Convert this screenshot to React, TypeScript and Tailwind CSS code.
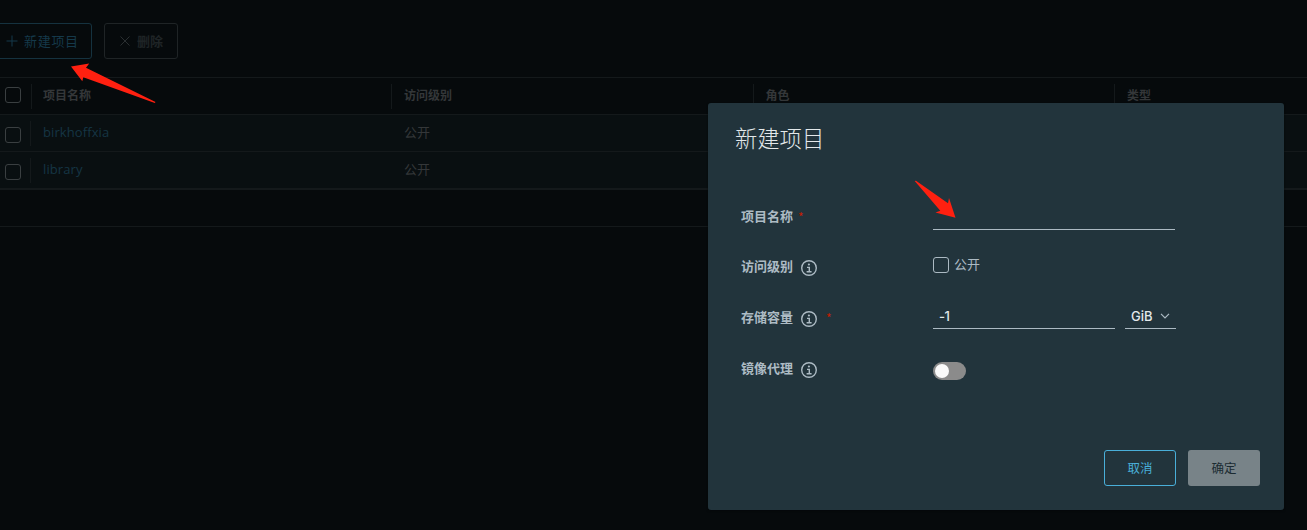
import * as React from "react";

const columns = ["项目名称", "访问级别", "角色", "类型"];

const projects = [
  { name: "birkhoffxia", access: "公开" },
  { name: "library", access: "公开" },
];

function InfoIcon() {
  return (
    <svg className="size-4 shrink-0" viewBox="0 0 16 16" fill="none" stroke="currentColor">
      <circle cx="8" cy="8" r="7.3" strokeWidth="1.4" />
      <circle cx="7.9" cy="4.5" r="1.1" fill="currentColor" stroke="none" />
      <path d="M6 7.4H8.3V11.6M5.6 11.7H10.6" strokeWidth="1.4" />
    </svg>
  );
}

function Required() {
  return <span className="mt-0.5 text-[12px] leading-none font-normal text-[#c21d00]">*</span>;
}

interface FieldProps {
  label: string;
  info?: boolean;
  required?: boolean;
  children: React.ReactNode;
}

function Field({ label, info, required, children }: FieldProps) {
  return (
    <div className="flex h-[51px] items-start first:h-[50px]">
      <div className="flex h-6 w-48 items-center text-[13px] font-bold text-[#adbbc4]">
        <span className="pb-px leading-[22px]">{label}</span>
        {info && (
          <span className="mt-1 ml-2">
            <InfoIcon />
          </span>
        )}
        {required && (
          <span className={info ? "ml-[9px] flex" : "ml-[5px] flex"}>
            <Required />
          </span>
        )}
      </div>
      {children}
    </div>
  );
}

function Toolbar() {
  return (
    <div className="flex gap-3 pt-[23px] text-[13px]">
      <button className="-ml-1 flex h-9 w-24 items-center rounded-[3px] border border-[#15323f] pl-[9px] tracking-[0.7px] text-[#15394a]">
        <svg className="mr-1.5 size-3" viewBox="0 0 12 12" stroke="currentColor">
          <path d="M6 0.5V11.5M0.5 6H11.5" />
        </svg>
        新建项目
      </button>
      <button className="flex h-9 w-[74px] items-center rounded-[3px] border border-[#1f2426] pl-[15px] font-bold text-[#1f2426]">
        <svg className="mr-[7px] size-[10px]" viewBox="0 0 10 10" stroke="#2a2f31">
          <path d="M0.5 0.5L9.5 9.5M9.5 0.5L0.5 9.5" />
        </svg>
        删除
      </button>
    </div>
  );
}

function ProjectGrid() {
  return (
    <div className="mt-[18px] border-t border-[#14191b]">
      <div className="flex h-[37px] items-center border-b border-[#14191b] text-xs font-bold text-[#343739]">
        <div className="w-[31px] shrink-0 pl-[5px]">
          <div className="mt-[-3px] size-4 rounded-[3px] border border-[#3a3f41]" />
        </div>
        {columns.map((c, i) => (
          <div
            key={c}
            className={
              i === 0
                ? "flex h-[25px] w-[360px] shrink-0 items-center border-l border-[#14191b] pb-0.5 pl-[11px]"
                : "flex h-[25px] w-[361.5px] shrink-0 items-center border-l border-[#14191b] pb-0.5 pl-3"
            }
          >
            {c}
          </div>
        ))}
      </div>
      {projects.map((p) => (
        <div
          key={p.name}
          className="flex h-[37px] items-center border-b border-[#14191b] bg-[#090f11] text-[13px] text-[#343739] last-of-type:h-[38px] last-of-type:border-b-2"
        >
          <div className="w-[30px] pl-[5px]">
            <div className="mt-[3px] size-4 rounded-[3px] border border-[#3a3f41]" />
          </div>
          <div className="flex h-[25px] w-[362px] items-center border-l border-[#14191b] pl-3 text-[#153544]">
            <span className="pb-px font-['Open_Sans',sans-serif] tracking-[0.1px]">{p.name}</span>
          </div>
          <div className="pb-0.5 pl-3">{p.access}</div>
        </div>
      ))}
      <footer className="h-[37px] border-b border-[#14191b]" />
    </div>
  );
}

function NewProjectDialog() {
  return (
    <div className="absolute top-[103px] left-[708px] flex h-[407px] w-[576px] flex-col rounded-[3px] bg-[#22343c] pt-[19px] pr-6 pb-6 pl-[26px] shadow-[0_1px_2px_#05080a]">
      <h3 className="pl-px text-[22.3px] leading-[30px] font-light text-[#e3e8ea]">新建项目</h3>
      <div className="mt-[52px] pl-[7px]">
        <Field label="项目名称" required>
          <div className="h-[26px] w-[242px] border-b border-[#acbac3]" />
        </Field>
        <Field label="访问级别" info>
          <div className="mt-px flex h-5 items-center text-[13px] text-[#acbac3]">
            <span className="mr-[5px] size-4 rounded-[3px] border border-[#acbac3]" />
            <span className="pb-0.5">公开</span>
          </div>
        </Field>
        <Field label="存储容量" info required>
          <div className="flex gap-2.5 font-[Inter] text-[13px] leading-[23px] font-medium text-[#e3e8ea]">
            <div className="h-6 w-[182px] border-b border-[#acbac3] pl-1.5 tracking-[-0.6px]">-1</div>
            <div className="flex h-6 w-[51px] items-center border-b border-[#acbac3] pl-1.5">
              <span>GiB</span>
              <svg className="mb-px ml-[7px] h-[6px] w-2.5" viewBox="0 0 10 6" fill="none" stroke="#acbac3">
                <path d="M1 0.8L5 4.8L9 0.8" strokeWidth="1.2" />
              </svg>
            </div>
          </div>
        </Field>
        <Field label="镜像代理" info>
          <div className="mt-1.5 flex h-[18px] w-[33px] items-center rounded-full bg-[#8b8b8b] pl-0.5">
            <span className="size-3.5 rounded-full bg-[#fafafa]" />
          </div>
        </Field>
      </div>
      <div className="mt-auto flex justify-end gap-3 text-[12.5px]">
        <button className="h-9 w-[72px] rounded-[3px] border border-[#49afd9] text-[#49afd9]">取消</button>
        <button className="h-9 w-[72px] rounded-[3px] bg-[#788388] text-[#1b2b32]">确定</button>
      </div>
    </div>
  );
}

export default function App() {
  return (
    <div className="relative h-[530px] w-[1307px] overflow-hidden bg-[#060a0c] font-['Noto_Sans_CJK_SC',sans-serif]">
      <Toolbar />
      <ProjectGrid />
      <NewProjectDialog />
      <svg className="absolute inset-0" width="1307" height="530" fill="#ff2010">
        <path d="M71 66.6L89.2 63.5L86 67.8L155.5 102L154.8 103L83.3 77.2L82.3 81.2Z" />
        <path d="M914.7 181L916 180.8L948 203.3L949 198L955.5 217.8L935.5 212.5L940.3 210.7Z" />
      </svg>
    </div>
  );
}
